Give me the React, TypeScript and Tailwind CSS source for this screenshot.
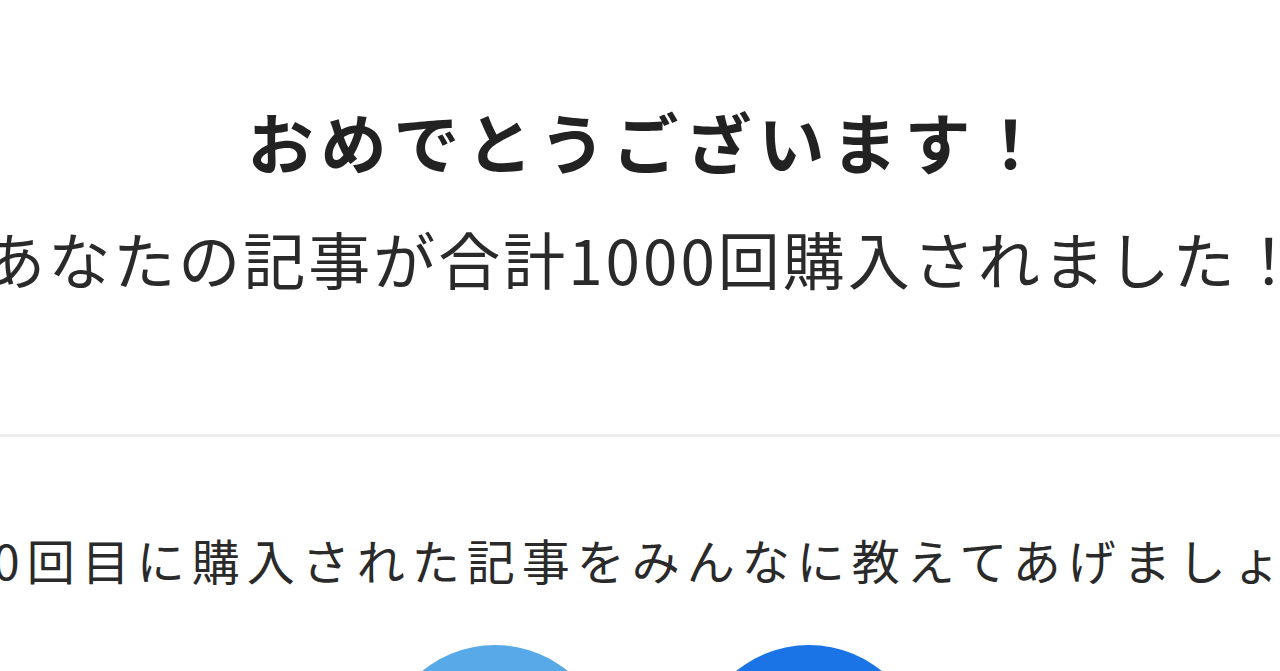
import React from 'react';

const jp = { fontFamily: '"Noto Sans CJK JP", "Noto Sans", sans-serif' };

export default function App() {
  return (
    <div className="w-[1280px] h-[671px] overflow-hidden bg-white text-[#222]" style={jp}>
      <div className="flex justify-center pt-[96px] pl-[18px]">
        <h1 className="shrink-0 whitespace-nowrap text-[66px] leading-[88px] font-bold tracking-[7px]">
          おめでとうございます！
        </h1>
      </div>
      <div className="flex justify-center mt-[34px] pl-[6px]">
        <p className="shrink-0 whitespace-nowrap text-[62px] leading-[80px] tracking-[3px] text-[#2a2a2a]">
          あなたの記事が合計1000回購入されました！
        </p>
      </div>
      <div className="h-[3px] bg-[#eeeeee] mt-[136px]" />
      <div className="flex justify-center mt-[90px] pl-[10px]">
        <p className="shrink-0 whitespace-nowrap text-[48px] leading-[64px] tracking-[7px] text-[#2a2a2a]">
          1000回目に購入された記事をみんなに教えてあげましょう！
        </p>
      </div>
      <div className="flex justify-center gap-[84px] pl-[24px] mt-[54px]">
        <button className="w-[230px] h-[230px] shrink-0 rounded-full bg-[#58a9e8]" aria-label="share twitter" />
        <button className="w-[230px] h-[230px] shrink-0 rounded-full bg-[#1a74e6]" aria-label="share facebook" />
      </div>
    </div>
  );
}
